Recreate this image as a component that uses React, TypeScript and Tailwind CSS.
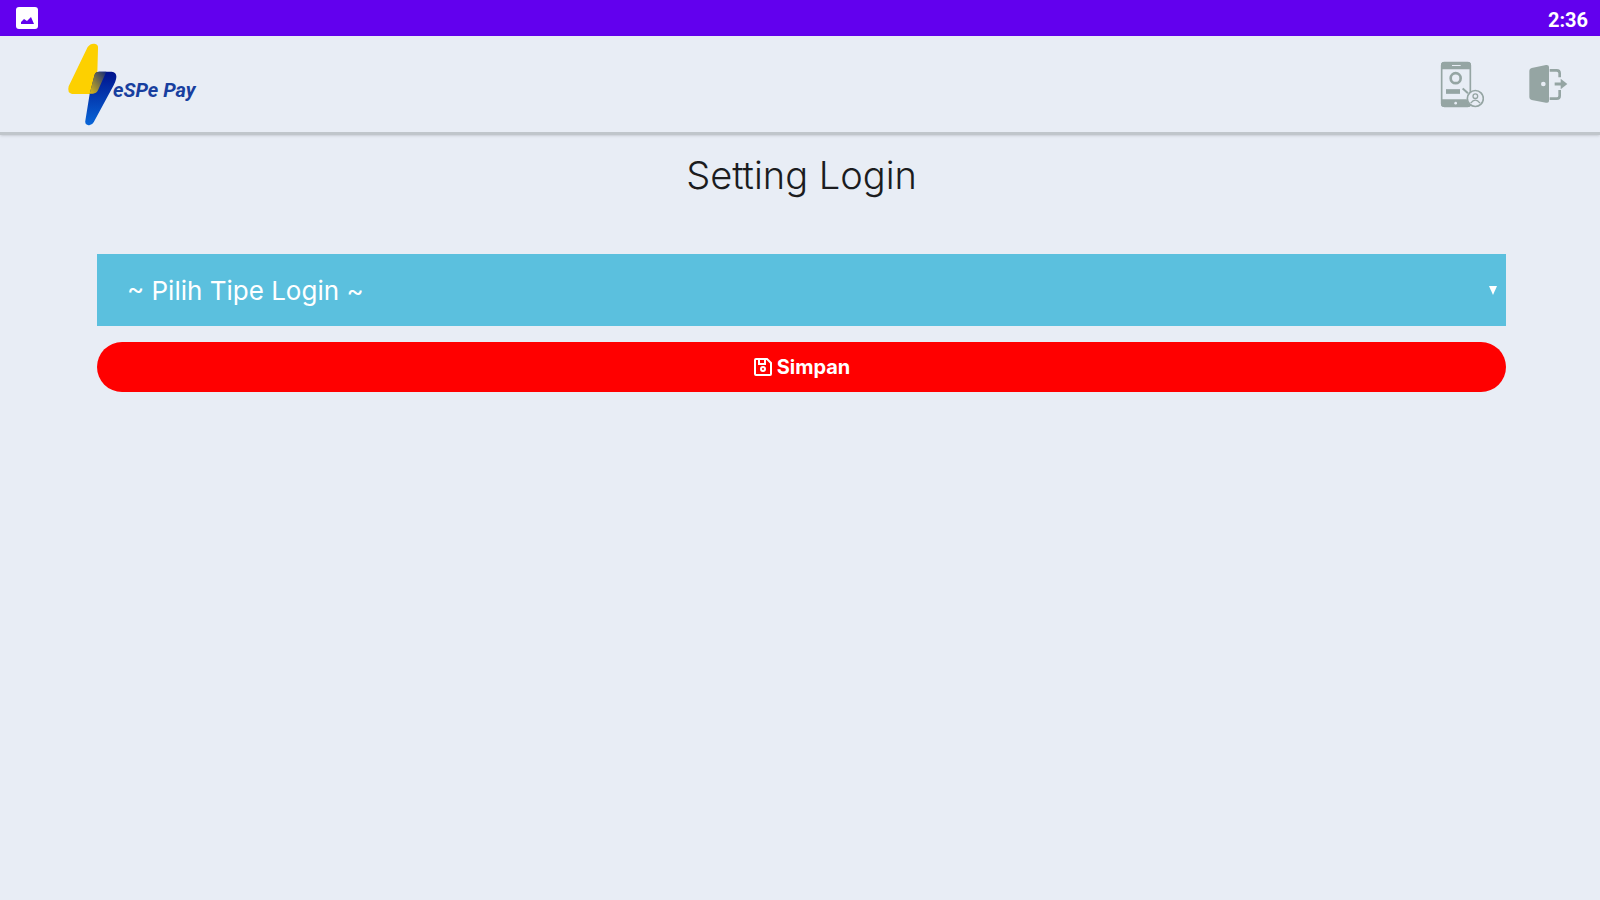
function BoltLogo() {
    return (
        <svg viewBox="50 40 150 249" className="w-[50px] h-[83px]" aria-hidden="true">
            <defs>
                <linearGradient id="blue" x1="0" y1="0" x2="0" y2="1">
                    <stop offset="0" stopColor="#00128c" />
                    <stop offset="1" stopColor="#0866d8" />
                </linearGradient>
                <linearGradient id="overlap" x1="1" y1="0" x2="0" y2="1">
                    <stop offset="0" stopColor="#10287c" />
                    <stop offset="1" stopColor="#e0bc12" />
                </linearGradient>
            </defs>
            <path
                d="M112 52Q120 41 132 42Q145 44 143 57L141 128L132 193H65Q50 190 55 170Z"
                fill="#fdd000"
            />
            <path
                d="M132 138Q134 126 147 126H184Q202 128 197 149Q195 158 190 167L130 278Q124 289 112 286Q103 284 105 273L118 193Z"
                fill="url(#blue)"
            />
            <path d="M132 138Q134 126 147 126H168L143 182Q138 192 128 192H118Z" fill="url(#overlap)" />
        </svg>
    );
}

function PhoneIcon() {
    return (
        <svg viewBox="0 0 132 140" className="w-11 h-[47px]" fill="none" stroke="#95a5a3" aria-hidden="true">
            <rect x="5" y="5" width="86" height="130" rx="8" strokeWidth="5" />
            <path d="M3 24V12Q3 2 13 2H83Q93 2 93 12V24ZM3 114H80Q84 128 93 134Q90 138 83 138H13Q3 138 3 128Z" fill="#95a5a3" stroke="none" />
            <path d="M36 13H62" stroke="#e8edf5" strokeWidth="3" />
            <circle cx="47" cy="126" r="4" fill="#e8edf5" stroke="none" />
            <circle cx="47" cy="51" r="15" strokeWidth="8" />
            <rect x="18" y="84" width="42" height="14" fill="#95a5a3" stroke="none" />
            <path d="M68 82L84 96" strokeWidth="6" />
            <circle cx="106" cy="112" r="24" fill="#e8edf5" strokeWidth="5" />
            <circle cx="106" cy="105" r="7" strokeWidth="4" />
            <path d="M92 126Q106 108 120 126" strokeWidth="4" />
        </svg>
    );
}

function ExitIcon() {
    return (
        <svg viewBox="0 0 120 120" className="size-10" fill="none" stroke="#95a5a3" aria-hidden="true">
            <path d="M4 20Q4 14 11 12L54 3Q63 2 63 9V111Q63 118 54 116L11 108Q4 106 4 100Z" fill="#95a5a3" stroke="none" />
            <circle cx="46" cy="60" r="7" fill="#e8edf5" stroke="none" />
            <path d="M65 19H86Q95 19 95 28V40M65 104H86Q95 104 95 95V78" strokeWidth="8" />
            <path d="M80 60H108" strokeWidth="9" />
            <path d="M98 44L118 60L98 76Z" fill="#95a5a3" stroke="none" />
        </svg>
    );
}

function StatusBar() {
    return (
        <div className="flex h-9 items-center justify-between bg-[#6200ee] px-3 text-white">
            <svg viewBox="0 0 22 22" className="ml-1 size-[22px]" aria-hidden="true">
                <rect width="22" height="22" rx="3" fill="#fff" />
                <path d="M5 17V15L8 12L11 14L15 10L18 17Z" fill="#6200ee" />
            </svg>
            <span className="pt-1 font-['Roboto',sans-serif] text-xl font-bold">2:36</span>
        </div>
    );
}

export default function App() {
    return (
        <div className="min-h-screen bg-[#e8edf5] font-['Inter',sans-serif]">
            <StatusBar />
            <header className="flex h-[99px] items-center justify-between border-b-3 border-[#c0c6cb] pl-[67px] pr-8 shadow-sm">
                <a href="#" className="flex items-center">
                    <BoltLogo />
                    <span className="-ml-1 mt-3 font-['Roboto',sans-serif] text-xl font-bold italic text-[#183f9f]">
                        eSPe Pay
                    </span>
                </a>
                <nav className="flex items-center gap-11">
                    <button type="button" aria-label="Akun">
                        <PhoneIcon />
                    </button>
                    <button type="button" aria-label="Keluar">
                        <ExitIcon />
                    </button>
                </nav>
            </header>
            <main className="pl-[97px] pr-[94px] pt-5">
                <h1 className="text-center text-[38px] leading-10 font-light text-[#1b1c1e]">Setting Login</h1>
                <form className="mt-[59px] flex flex-col gap-4">
                    <div className="relative">
                        <select
                            aria-label="Tipe Login"
                            className="h-[72px] w-full appearance-none bg-[#5bc0de] px-[30px] text-[26px] text-white outline-none"
                        >
                            <option>~ Pilih Tipe Login ~</option>
                        </select>
                        <svg
                            viewBox="0 0 10 10"
                            className="pointer-events-none absolute right-2 top-8 size-[10px]"
                            aria-hidden="true"
                        >
                            <path d="M1 0H9L5 9Z" fill="#fff" />
                        </svg>
                    </div>
                    <button
                        type="button"
                        className="flex h-[50px] items-center justify-center gap-1 rounded-full bg-[#ff0000] text-xl font-bold text-white"
                    >
                        <svg viewBox="0 0 20 20" className="size-5" fill="none" stroke="#fff" strokeWidth="2" aria-hidden="true">
                            <path d="M3 2H14L18 6V17Q18 18 17 18H3Q2 18 2 17V3Q2 2 3 2Z" />
                            <path d="M6 2V7H12V2" />
                            <circle cx="10" cy="12" r="2" />
                        </svg>
                        Simpan
                    </button>
                </form>
            </main>
        </div>
    );
}
